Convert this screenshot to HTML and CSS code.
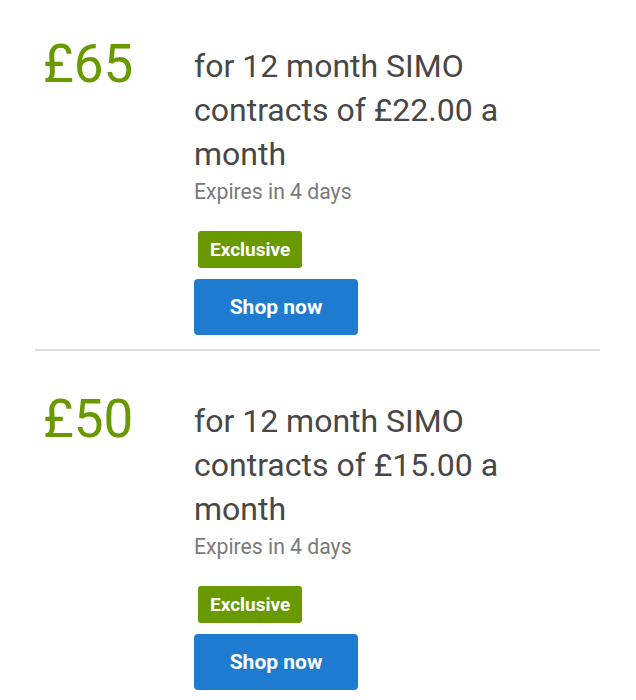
FILE: index.html
```html
<!DOCTYPE html>
<html lang="en">
<head>
<meta charset="utf-8">
<title>Offers</title>
<link rel="stylesheet" href="styles.css">
</head>
<body>
<div class="list">
  <div class="offer">
    <div class="price">£65</div>
    <div class="details">
      <div class="title">for 12 month SIMO contracts of £22.00 a month</div>
      <div class="expires">Expires in 4 days</div>
      <div class="badge">Exclusive</div>
      <a class="shop" href="#">Shop now</a>
    </div>
  </div>
  <div class="divider"></div>
  <div class="offer">
    <div class="price">£50</div>
    <div class="details">
      <div class="title">for 12 month SIMO contracts of £15.00 a month</div>
      <div class="expires">Expires in 4 days</div>
      <div class="badge">Exclusive</div>
      <a class="shop" href="#">Shop now</a>
    </div>
  </div>
</div>
</body>
</html>
```

FILE: styles.css
```css
html, body {
  margin: 0;
  padding: 0;
  background: #ffffff;
}
body {
  font-family: Roboto, "Noto Sans", "Liberation Sans", sans-serif;
  width: 636px;
  height: 700px;
  overflow: hidden;
}
.list {
  display: flex;
  flex-direction: column;
}
.offer {
  display: flex;
  padding: 44px 0 14px 0;
}
.price {
  width: 151px;
  padding-left: 43px;
  margin-top: -2px;
  font-size: 53px;
  line-height: 44px;
  color: #689a00;
  font-weight: 400;
  flex-shrink: 0;
}
.details {
  display: flex;
  flex-direction: column;
  align-items: flex-start;
  width: 345px;
}
.title {
  font-size: 32px;
  line-height: 44px;
  color: #474747;
}
.expires {
  font-size: 21.2px;
  line-height: 32px;
  color: #7a7a7a;
}
.badge {
  margin-top: 23px;
  margin-left: 4px;
  height: 37px;
  padding: 0 12px;
  display: inline-flex;
  align-items: center;
  background: #689a00;
  color: #ffffff;
  font-size: 19px;
  font-weight: 700;
  border-radius: 3px;
}
.shop {
  margin-top: 11px;
  height: 56px;
  width: 164px;
  display: inline-flex;
  align-items: center;
  justify-content: center;
  background: #1e7bd0;
  color: #ffffff;
  font-size: 21px;
  font-weight: 700;
  text-decoration: none;
  border-radius: 4px;
}
.divider {
  height: 2px;
  background: #dedede;
  margin: 0 36px 4px 35px;
}
```
